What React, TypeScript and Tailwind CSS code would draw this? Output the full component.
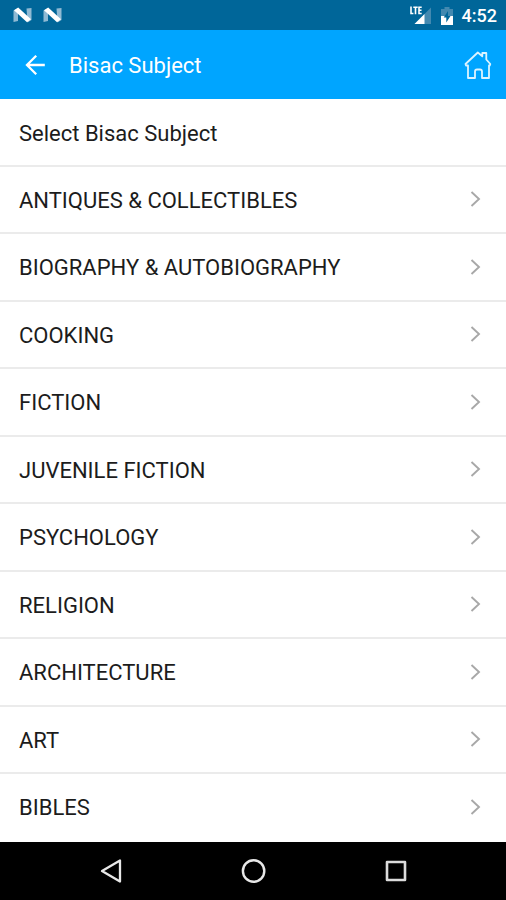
const subjects = [
  "ANTIQUES & COLLECTIBLES",
  "BIOGRAPHY & AUTOBIOGRAPHY",
  "COOKING",
  "FICTION",
  "JUVENILE FICTION",
  "PSYCHOLOGY",
  "RELIGION",
  "ARCHITECTURE",
  "ART",
  "BIBLES",
];

function NougatIcon() {
  return (
    <svg width="20" height="16" viewBox="0 0 20 16">
      <path d="M1.5 3.5 6 1v13l-4.5 1zM14.5 1.5l5-.5v12l-4 2.5z" fill="#8fb9d3" />
      <path d="M2 3.2 6.2.6 19 12.3 15 15.3z" fill="#fff" />
    </svg>
  );
}

function StatusBar() {
  return (
    <div className="flex h-[30px] items-center justify-between bg-[#006699] pr-[9px] pl-3">
      <div className="flex gap-[10px]">
        <NougatIcon />
        <NougatIcon />
      </div>
      <div className="flex items-center">
        <svg width="22" height="20" viewBox="0 0 22 20" className="mr-[10px]">
          <path d="M22 2.5V19H5.5z" fill="#4389b0" />
          <path d="M15.5 9V19H5.5z" fill="#fff" />
          <path d="M0 0h13.5v10.5H0z" fill="#006699" />
          <path d="M2 1.5v7h2.4M4.3 2.2h4.4M6.5 2.2v7M12.7 2.2H10v6.3h2.7M10 5.3h2.5" fill="none" stroke="#fff" strokeWidth="1.6" />
        </svg>
        <svg width="12" height="19" viewBox="0 0 12 19" className="mr-[9px]">
          <path d="M3.5 1h5v2H12v16H0V3h3.5z" fill="#4389b0" />
          <path d="M0 10h12v9H0z" fill="#fff" />
          <path d="M7 5 2.7 11.5h2.6v5l4.2-6.6H7z" fill="#006699" />
        </svg>
        <span className="pt-[2px] text-[18px] leading-none font-medium">4:52</span>
      </div>
    </div>
  );
}

function AppBar() {
  return (
    <header className="flex h-[69px] items-center bg-[#00a5ff] pr-[14px] pl-6">
      <svg width="22" height="22" viewBox="0 0 22 22" fill="none" stroke="#fff" strokeWidth="2.3">
        <path d="M20.8 11H3M12.2 1.8 3 11l9.2 9.2" />
      </svg>
      <h1 className="ml-[23px] flex-1 pt-[2px] text-[22px] leading-none">Bisac Subject</h1>
      <svg width="28" height="30" viewBox="0 0 28 30" fill="none" stroke="#dcf3ff" strokeWidth="1.8" strokeLinejoin="round" strokeLinecap="round">
        <path d="M4 15.5H2L1.5 14 13.8 2.5l4.5 3.8V3h4v6.5l4 4.5-.5 1.5H25V28h-7v-6.5q0-2-2-2h-3q-2 0-2 2V28H4z" />
      </svg>
    </header>
  );
}

function NavigationBar() {
  return (
    <nav className="flex h-[58.5px] items-center justify-between bg-black pr-[99px] pl-[99px]">
      <svg width="24" height="26" viewBox="0 0 24 26" fill="none" stroke="#e8e8e8" strokeWidth="2.3" strokeLinejoin="round">
        <path d="M21 2.5v21L3 13z" />
      </svg>
      <svg width="26" height="26" viewBox="0 0 26 26" fill="none" stroke="#e8e8e8" strokeWidth="2.4">
        <circle cx="12.6" cy="13" r="10.7" />
      </svg>
      <svg width="22" height="22" viewBox="0 0 22 22" fill="none" stroke="#dcdcdc" strokeWidth="2.6" strokeLinejoin="round">
        <path d="M2 2h18v18H2z" />
      </svg>
    </nav>
  );
}

export default function App() {
  return (
    <div className="flex h-[900px] w-[506px] flex-col overflow-hidden bg-white font-['Roboto',sans-serif] text-white">
      <StatusBar />
      <AppBar />
      <main className="flex-1 text-[22px] leading-none text-[#1c1c1c]">
        <div className="flex h-[67.5px] items-center border-b-2 border-[#ebebeb] pt-1 pl-[19px]">
          Select Bisac Subject
        </div>
        {subjects.map((subject) => (
          <div
            key={subject}
            className="flex h-[67.5px] items-center justify-between border-b-2 border-[#ebebeb] pr-[25px] pl-[19px] last:border-b-0 last:pb-[2px]"
          >
            <span className="pt-[3px]">{subject}</span>
            <svg width="11" height="16" viewBox="0 0 11 16" fill="none" stroke="#a8a8a8" strokeWidth="1.9">
              <path d="m1.5 1 7.5 7-7.5 7" />
            </svg>
          </div>
        ))}
      </main>
      <NavigationBar />
    </div>
  );
}
